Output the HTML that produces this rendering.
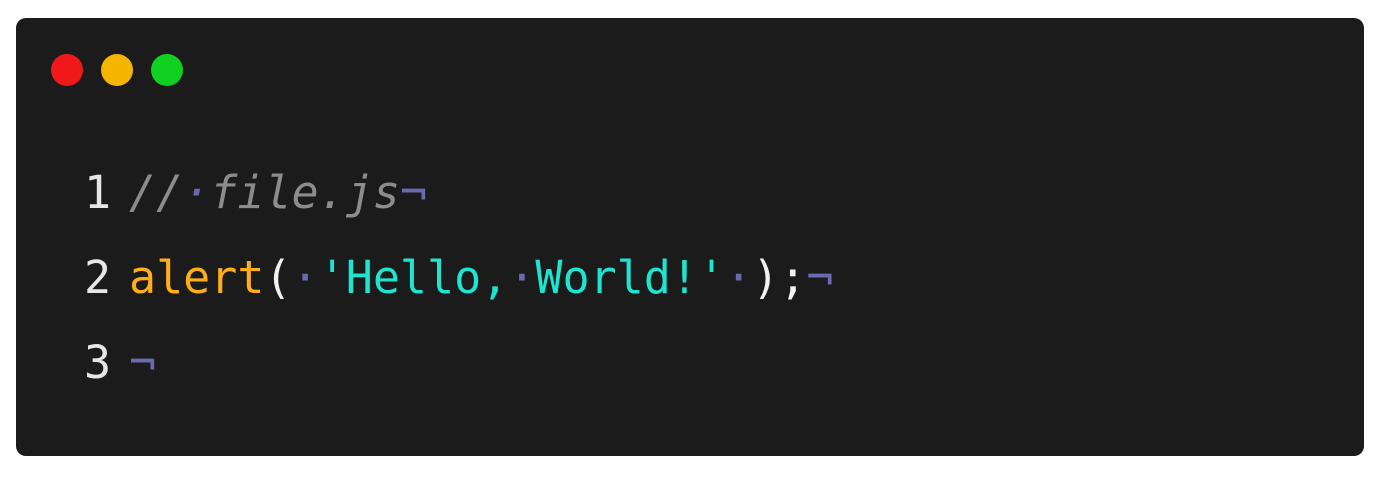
<!DOCTYPE html>
<html><head><style>
html,body{margin:0;padding:0;background:#fff;width:1385px;height:480px;overflow:hidden}
.win{position:absolute;left:16px;top:18px;width:1348px;height:438px;background:#1b1b1b;border-radius:10px}
.dot{position:absolute;top:54px;width:32px;height:32px;border-radius:50%}
.code{position:absolute;left:129px;font-family:"DejaVu Sans Mono","Liberation Mono",monospace;font-size:45px;white-space:pre;line-height:1}
.num{position:absolute;left:84px;font-family:"DejaVu Sans Mono","Liberation Mono",monospace;font-size:45px;line-height:1;color:#e6e6e6}
.c{color:#8c8c8c;font-style:italic}
.p{color:#6a6ab0}
.f{color:#ffae1a}
.s{color:#1de5d0}
.w{color:#f2f2f2}
</style></head><body>
<div class="win"></div>
<div class="dot" style="left:51px;background:#f01818"></div>
<div class="dot" style="left:101px;background:#f5b400"></div>
<div class="dot" style="left:151px;background:#10d020"></div>
<div class="num" style="top:170px">1</div>
<div class="num" style="top:255px">2</div>
<div class="num" style="top:340px">3</div>
<div class="code" style="top:170px"><span class="c">//<span class="p">·</span>file.js</span><span class="p">¬</span></div>
<div class="code" style="top:255px"><span class="f">alert</span><span class="w">(</span><span class="p">·</span><span class="s">'Hello,</span><span class="p">·</span><span class="s">World!'</span><span class="p">·</span><span class="w">);</span><span class="p">¬</span></div>
<div class="code" style="top:340px"><span class="p">¬</span></div>
</body></html>
